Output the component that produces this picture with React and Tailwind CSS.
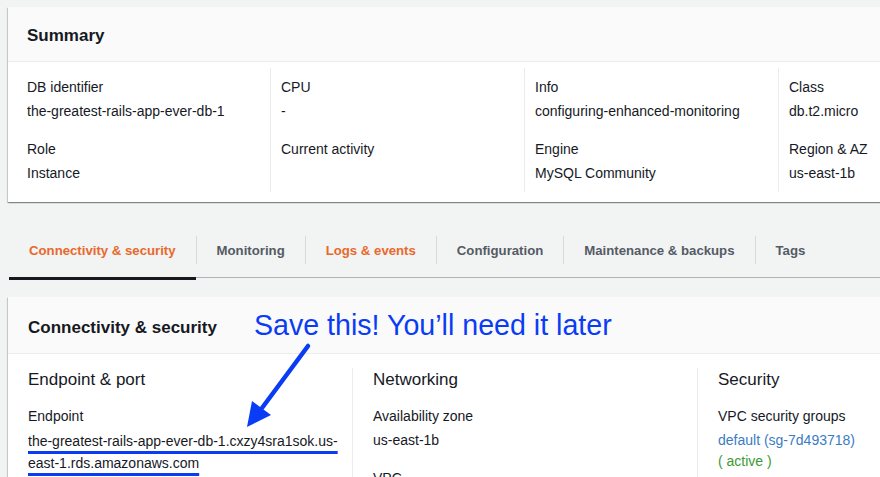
import React from 'react';

const font = { fontFamily: '"Liberation Sans", Arial, sans-serif' };

const summaryCols = [
  [["DB identifier", "the-greatest-rails-app-ever-db-1"], ["Role", "Instance"]],
  [["CPU", "-"], ["Current activity", ""]],
  [["Info", "configuring-enhanced-monitoring"], ["Engine", "MySQL Community"]],
  [["Class", "db.t2.micro"], ["Region & AZ", "us-east-1b"]],
];

const tabs = [
  { label: "Connectivity & security", active: true, orange: true },
  { label: "Monitoring" },
  { label: "Logs & events", orange: true },
  { label: "Configuration" },
  { label: "Maintenance & backups" },
  { label: "Tags" },
];

const cardShadow =
  "shadow-[0_1px_1px_0_rgba(0,28,36,0.3),1px_1px_1px_0_rgba(0,28,36,0.15),-1px_1px_1px_0_rgba(0,28,36,0.15)]";

const App = () => {
  return (
    <div
      className="w-[880px] h-[477px] overflow-hidden bg-[#f2f3f3] pt-[7px] pl-2 text-[#16191f]"
      style={font}
    >
      {/* ================= SUMMARY ================= */}
      <div className={"w-[1040px] bg-white " + cardShadow}>
        <div className="h-[55px] bg-[#fafafa] border-b border-[#eaeded] flex items-center px-[19px] pt-[4px]">
          <h2 className="text-[17px] font-bold">Summary</h2>
        </div>
        <div className="flex pt-[6px] pb-[10px] pl-[19px]">
          {summaryCols.map((col, i) => (
            <div
              key={i}
              className={
                i === 0
                  ? "w-[243px] shrink-0 py-[9px]"
                  : "w-[254px] shrink-0 py-[9px] pl-[10px] border-l border-[#eaeded]"
              }
            >
              {col.map(([label, value], j) => (
                <div key={label} className={j > 0 ? "mt-[18px]" : ""}>
                  <div className="text-sm leading-5">{label}</div>
                  <div className="text-sm leading-5 mt-1 h-5">{value}</div>
                </div>
              ))}
            </div>
          ))}
        </div>
      </div>

      {/* ================= TABS ================= */}
      <div className="mt-[21px] ml-px w-[1000px] flex items-center h-[55px] border-b border-[#aab7b8]">
        {tabs.map((t, i) => (
          <React.Fragment key={t.label}>
            {i > 0 && <div className="w-px h-[28px] bg-[#d5dbdb]" />}
            <div
              className={
                "px-5 flex items-center text-[13.2px] font-bold " +
                (t.orange ? "text-[#e8692c] " : "text-[#545b64] ") +
                (t.active ? "shadow-[inset_0_-3px_0_#16191f] mt-[2px] h-[57px] pb-[1px]" : "h-[55px] pt-[1px]")
              }
            >
              {t.label}
            </div>
          </React.Fragment>
        ))}
      </div>

      {/* ================= CONNECTIVITY ================= */}
      <div className={"relative mt-[19px] w-[1040px] bg-white " + cardShadow}>
        <div className="h-[57px] bg-[#fafafa] border-b border-[#eaeded] flex items-center px-5 pt-[5px]">
          <h2 className="text-[17px] font-bold">Connectivity &amp; security</h2>
        </div>

        <div className="flex pt-[14px]">
          <div className="w-[344px] shrink-0 pl-5">
            <h3 className="text-[17px] leading-6">Endpoint &amp; port</h3>
            <div className="mt-[14px] text-sm leading-5">Endpoint</div>
            <div className="mt-[4px] text-sm leading-[22px] underline decoration-[#0a3cf5] decoration-[3px] underline-offset-[5px] [text-decoration-skip-ink:none]">
              the-greatest-rails-app-ever-db-1.cxzy4sra1sok.us-
              <br />
              east-1.rds.amazonaws.com
            </div>
          </div>

          <div className="w-[345px] shrink-0 pl-5 border-l border-[#eaeded]">
            <h3 className="text-[17px] leading-6">Networking</h3>
            <div className="mt-[14px] text-sm leading-5">Availability zone</div>
            <div className="mt-1 text-sm leading-5">us-east-1b</div>
            <div className="mt-[18px] text-sm leading-5">VPC</div>
          </div>

          <div className="pl-5 border-l border-[#eaeded]">
            <h3 className="text-[17px] leading-6">Security</h3>
            <div className="mt-[14px] text-sm leading-5">VPC security groups</div>
            <div className="mt-1 text-sm leading-5 text-[#3a7cc4]">default (sg-7d493718)</div>
            <div className="mt-[1px] text-sm leading-5 text-[#3c9a32]">( active )</div>
          </div>
        </div>

        {/* annotation */}
        <div
          className="absolute left-[246px] top-[14px] text-[28.6px] leading-none text-[#0a3cf5] whitespace-nowrap"
          style={{ fontFamily: '"Liberation Sans", Helvetica, Arial, sans-serif' }}
        >
          Save this! You’ll need it later
        </div>
        <svg className="absolute left-[232px] top-[43px]" width="75" height="92" viewBox="0 0 75 92">
          <line x1="68" y1="6" x2="22" y2="68" stroke="#0a3cf5" strokeWidth="4.5" strokeLinecap="round" />
          <polygon points="7,87 12,61 31,75" fill="#0a3cf5" />
        </svg>
      </div>
    </div>
  );
};

export default App;
